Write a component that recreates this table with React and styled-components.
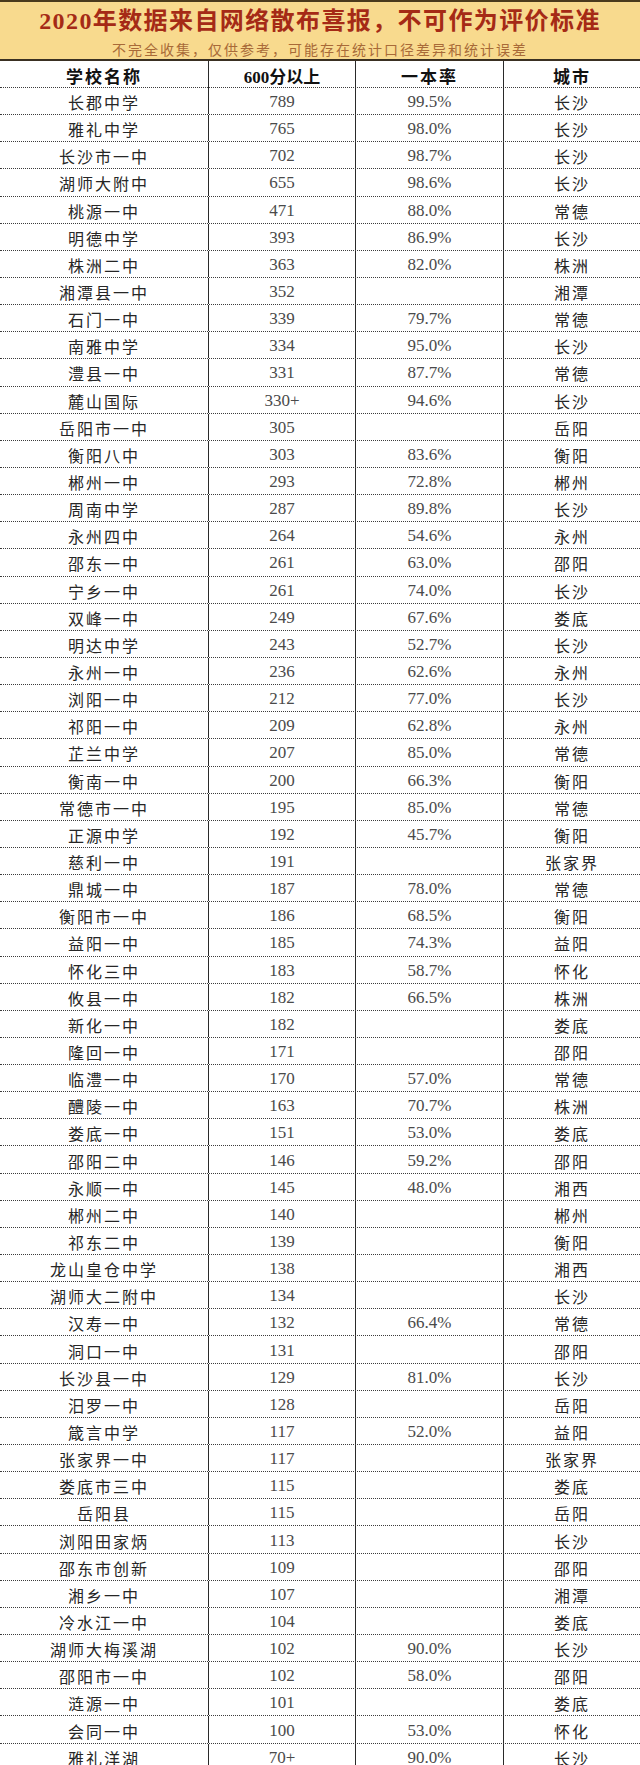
import React from 'react'
import styled, { createGlobalStyle } from 'styled-components'

const GlobalStyle = createGlobalStyle`
  html, body {
    margin: 0;
    padding: 0;
    background: #ffffff;
  }
  body {
    font-family: 'Liberation Serif', 'Noto Sans CJK SC', serif;
  }
`

// name, 600+, rate, city
const rows = [
  ['长郡中学', '789', '99.5%', '长沙'],
  ['雅礼中学', '765', '98.0%', '长沙'],
  ['长沙市一中', '702', '98.7%', '长沙'],
  ['湖师大附中', '655', '98.6%', '长沙'],
  ['桃源一中', '471', '88.0%', '常德'],
  ['明德中学', '393', '86.9%', '长沙'],
  ['株洲二中', '363', '82.0%', '株洲'],
  ['湘潭县一中', '352', '', '湘潭'],
  ['石门一中', '339', '79.7%', '常德'],
  ['南雅中学', '334', '95.0%', '长沙'],
  ['澧县一中', '331', '87.7%', '常德'],
  ['麓山国际', '330+', '94.6%', '长沙'],
  ['岳阳市一中', '305', '', '岳阳'],
  ['衡阳八中', '303', '83.6%', '衡阳'],
  ['郴州一中', '293', '72.8%', '郴州'],
  ['周南中学', '287', '89.8%', '长沙'],
  ['永州四中', '264', '54.6%', '永州'],
  ['邵东一中', '261', '63.0%', '邵阳'],
  ['宁乡一中', '261', '74.0%', '长沙'],
  ['双峰一中', '249', '67.6%', '娄底'],
  ['明达中学', '243', '52.7%', '长沙'],
  ['永州一中', '236', '62.6%', '永州'],
  ['浏阳一中', '212', '77.0%', '长沙'],
  ['祁阳一中', '209', '62.8%', '永州'],
  ['芷兰中学', '207', '85.0%', '常德'],
  ['衡南一中', '200', '66.3%', '衡阳'],
  ['常德市一中', '195', '85.0%', '常德'],
  ['正源中学', '192', '45.7%', '衡阳'],
  ['慈利一中', '191', '', '张家界'],
  ['鼎城一中', '187', '78.0%', '常德'],
  ['衡阳市一中', '186', '68.5%', '衡阳'],
  ['益阳一中', '185', '74.3%', '益阳'],
  ['怀化三中', '183', '58.7%', '怀化'],
  ['攸县一中', '182', '66.5%', '株洲'],
  ['新化一中', '182', '', '娄底'],
  ['隆回一中', '171', '', '邵阳'],
  ['临澧一中', '170', '57.0%', '常德'],
  ['醴陵一中', '163', '70.7%', '株洲'],
  ['娄底一中', '151', '53.0%', '娄底'],
  ['邵阳二中', '146', '59.2%', '邵阳'],
  ['永顺一中', '145', '48.0%', '湘西'],
  ['郴州二中', '140', '', '郴州'],
  ['祁东二中', '139', '', '衡阳'],
  ['龙山皇仓中学', '138', '', '湘西'],
  ['湖师大二附中', '134', '', '长沙'],
  ['汉寿一中', '132', '66.4%', '常德'],
  ['洞口一中', '131', '', '邵阳'],
  ['长沙县一中', '129', '81.0%', '长沙'],
  ['汨罗一中', '128', '', '岳阳'],
  ['箴言中学', '117', '52.0%', '益阳'],
  ['张家界一中', '117', '', '张家界'],
  ['娄底市三中', '115', '', '娄底'],
  ['岳阳县', '115', '', '岳阳'],
  ['浏阳田家炳', '113', '', '长沙'],
  ['邵东市创新', '109', '', '邵阳'],
  ['湘乡一中', '107', '', '湘潭'],
  ['冷水江一中', '104', '', '娄底'],
  ['湖师大梅溪湖', '102', '90.0%', '长沙'],
  ['邵阳市一中', '102', '58.0%', '邵阳'],
  ['涟源一中', '101', '', '娄底'],
  ['会同一中', '100', '53.0%', '怀化'],
  ['雅礼洋湖', '70+', '90.0%', '长沙'],
]

const Page = styled.div`
  width: 640px;
  background: #ffffff;
`

const Banner = styled.header`
  background: #f8da8e;
  border-top: 2px solid #4a3a1c;
  border-bottom: 2px solid #3a3022;
  height: 61px;
  box-sizing: border-box;
  display: flex;
  flex-direction: column;
  align-items: center;
  padding-top: 5px;
`

const Title = styled.h1`
  margin: 0;
  font-family: 'Liberation Serif', 'Noto Sans CJK SC', serif;
  font-size: 24px;
  line-height: 28px;
  font-weight: 700;
  letter-spacing: 1.4px;
  color: #a52a16;
`

const Subtitle = styled.p`
  margin: 5px 0 0;
  font-family: 'Noto Sans CJK SC', sans-serif;
  font-size: 14px;
  line-height: 18px;
  letter-spacing: 2px;
  color: #a86a38;
`

const Table = styled.div`
  display: flex;
  flex-direction: column;
`

const Row = styled.div`
  display: grid;
  grid-template-columns: 209px 147px 148px 1fr;
  height: ${(p) => (p.$head ? '27px' : '27.15px')};
  box-sizing: border-box;
  border-bottom: 1px dotted #3c3c3c;
  flex-shrink: 0;
`

const Cell = styled.div`
  display: flex;
  align-items: center;
  justify-content: center;
  padding-top: 2px;
  box-sizing: border-box;
  border-right: ${(p) => (p.$last ? 'none' : '1.5px solid #2a2a2a')};
  font-family: ${(p) =>
    p.$num
      ? "'Liberation Serif', 'Noto Sans CJK SC', serif"
      : "'Noto Sans CJK SC', sans-serif"};
  font-size: ${(p) => (p.$head ? '17px' : p.$num ? '17px' : '16px')};
  font-weight: ${(p) => (p.$head ? 700 : 400)};
  letter-spacing: ${(p) => (p.$num ? '0' : '2px')};
  color: ${(p) => (p.$head ? '#111' : p.$num ? '#4a4a4a' : '#262626')};
  white-space: nowrap;
`

export default function App() {
  return (
    <Page>
      <GlobalStyle />
      <Banner>
        <Title>2020年数据来自网络散布喜报，不可作为评价标准</Title>
        <Subtitle>不完全收集，仅供参考，可能存在统计口径差异和统计误差</Subtitle>
      </Banner>
      <Table>
        <Row $head>
          <Cell $head>学校名称</Cell>
          <Cell $head $num>600分以上</Cell>
          <Cell $head>一本率</Cell>
          <Cell $head $last>城市</Cell>
        </Row>
        {rows.map(([name, count, rate, city], i) => (
          <Row key={i}>
            <Cell>{name}</Cell>
            <Cell $num>{count}</Cell>
            <Cell $num>{rate}</Cell>
            <Cell $last>{city}</Cell>
          </Row>
        ))}
      </Table>
    </Page>
  )
}
